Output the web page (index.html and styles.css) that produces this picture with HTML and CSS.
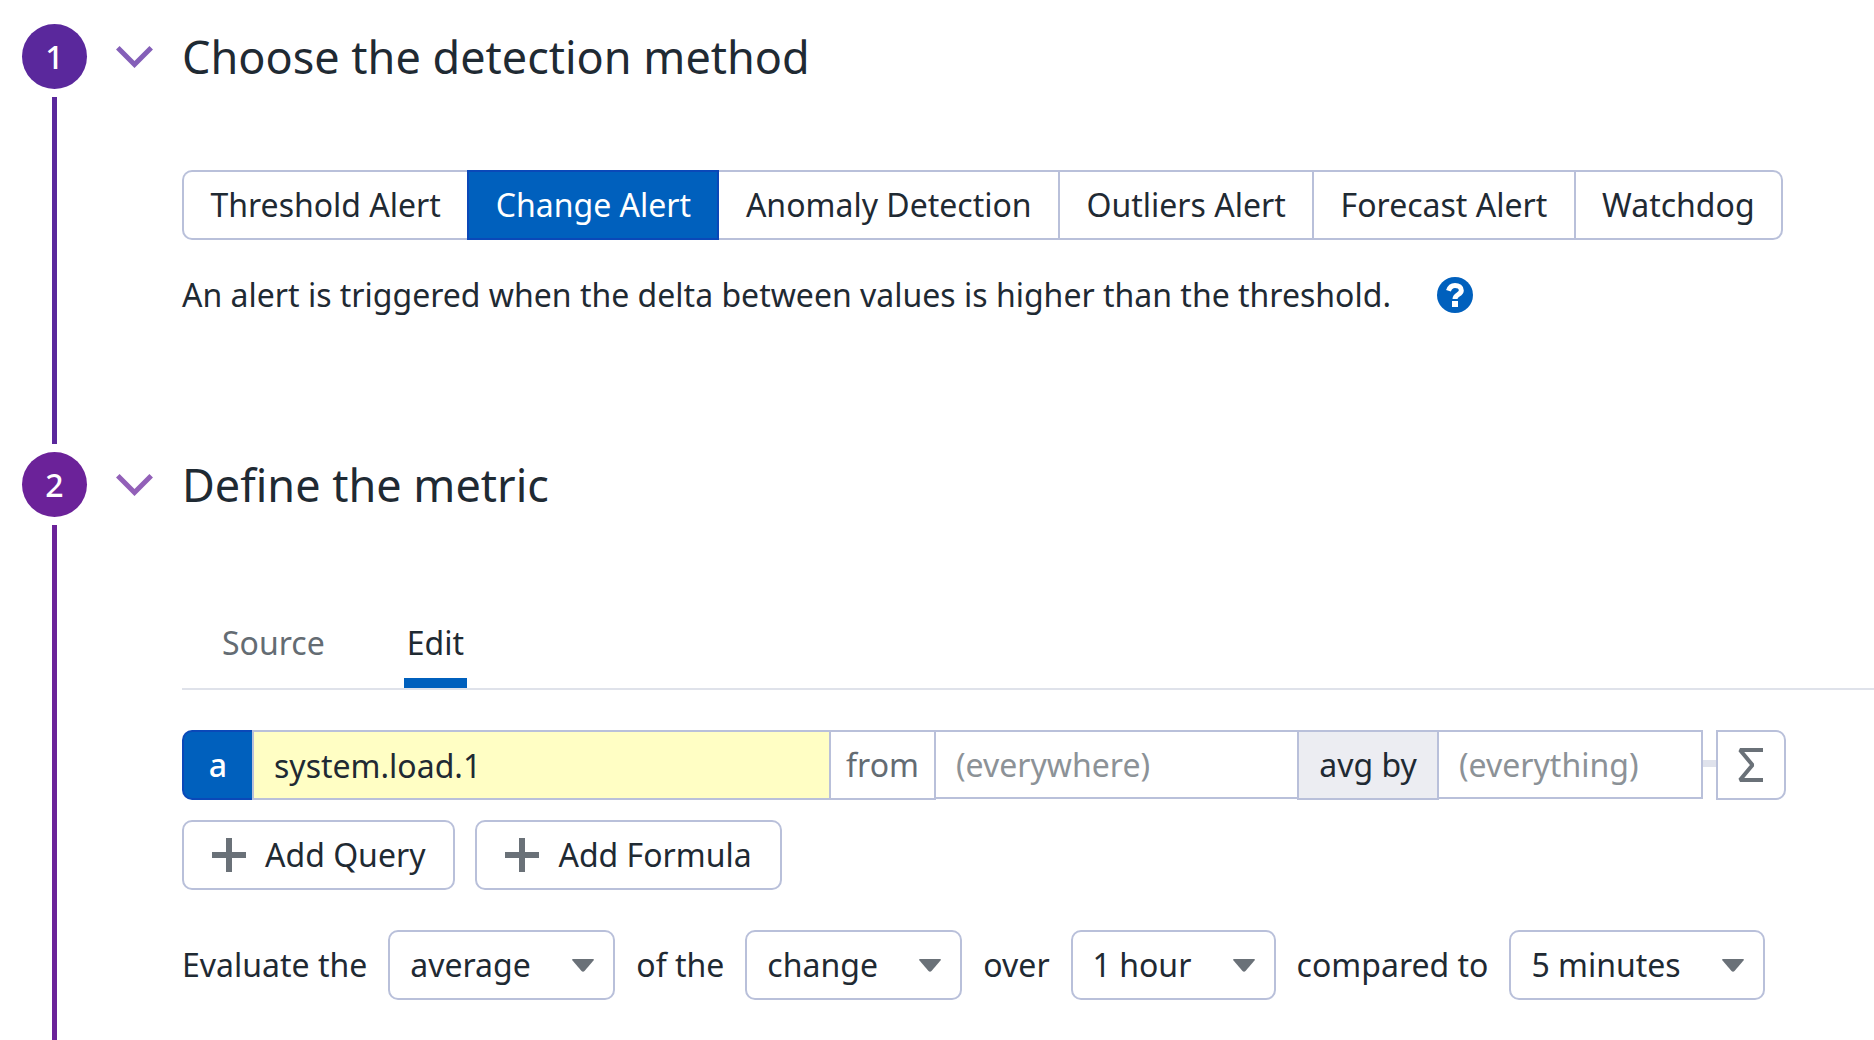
FILE: index.html
```html
<!DOCTYPE html>
<html lang="en">
<head>
<meta charset="utf-8">
<title>New Monitor</title>
<meta name="viewport" content="width=device-width, initial-scale=1">
<link rel="stylesheet" href="styles.css">
</head>
<body>
<main class="steps">
  <section class="step step-one">
    <div class="rail"><span class="badge">1</span><span class="line"></span></div>
    <button class="toggle" type="button" aria-label="Collapse step 1">
      <svg width="37" height="22" viewBox="0 0 37 22" aria-hidden="true"><path d="M1.800 1.800 18.500 18.500 35.200 1.800" fill="none" stroke="currentColor" stroke-width="5"/></svg>
    </button>
    <div class="content">
      <h2 class="title">Choose the detection method</h2>
      <div class="methods">
        <button class="method" type="button">Threshold Alert</button>
        <button class="method active" type="button" aria-pressed="true">Change Alert</button>
        <button class="method" type="button">Anomaly Detection</button>
        <button class="method" type="button">Outliers Alert</button>
        <button class="method" type="button">Forecast Alert</button>
        <button class="method" type="button">Watchdog</button>
      </div>
      <div class="description">
        <p class="text">An alert is triggered when the delta between values is higher than the threshold.</p>
        <button class="help" type="button" aria-label="Help">
          <svg width="36" height="36" viewBox="0 0 36 36" aria-hidden="true"><circle cx="18" cy="18" r="18" fill="#0060bd"/><path d="M11.500 13.800C12.500 10.400 14.800 8.500 18 8.500c3.700 0 6.300 1.800 6.300 4.900 0 4.300-6.300 3.900-6.300 8.600" fill="none" stroke="#fff" stroke-width="5"/><path d="M15 24h6v6h-6z" fill="#fff"/></svg>
        </button>
      </div>
    </div>
  </section>

  <section class="step step-two">
    <div class="rail"><span class="badge">2</span><span class="line"></span></div>
    <button class="toggle" type="button" aria-label="Collapse step 2">
      <svg width="37" height="22" viewBox="0 0 37 22" aria-hidden="true"><path d="M1.800 1.800 18.500 18.500 35.200 1.800" fill="none" stroke="currentColor" stroke-width="5"/></svg>
    </button>
    <div class="content">
      <h2 class="title">Define the metric</h2>
      <nav class="tabs">
        <a class="tab" href="#source">Source</a>
        <a class="tab current" href="#edit" aria-current="page">Edit</a>
      </nav>
      <div class="query">
        <button class="query-name" type="button">a</button>
        <input class="field metric" type="text" aria-label="Metric" value="system.load.1">
        <label class="from" for="scope">from</label>
        <input class="field scope" id="scope" type="text" placeholder="(everywhere)">
        <button class="aggregate" type="button">avg by</button>
        <input class="field group" type="text" aria-label="Group by" placeholder="(everything)">
        <span class="connector"></span>
        <button class="sigma" type="button" aria-label="Add function">
          <svg width="28" height="36" viewBox="0 0 28 36" aria-hidden="true"><path d="M26 3H3L15.500 18 3 33H26" fill="none" stroke="currentColor" stroke-width="4" stroke-linejoin="bevel"/></svg>
        </button>
      </div>
      <div class="actions">
        <button class="add" type="button"><svg width="34" height="34" viewBox="0 0 34 34" aria-hidden="true"><path d="M0 17h34M17 0v34" stroke="#6a7178" stroke-width="6"/></svg>Add Query</button>
        <button class="add" type="button"><svg width="34" height="34" viewBox="0 0 34 34" aria-hidden="true"><path d="M0 17h34M17 0v34" stroke="#6a7178" stroke-width="6"/></svg>Add Formula</button>
      </div>
      <div class="evaluate">
        <label for="aggregator">Evaluate the</label>
        <span class="picker"><select id="aggregator"><option>average</option></select><svg class="caret" width="22" height="13" viewBox="0 0 22 13" aria-hidden="true"><path d="M1 0h20q1.500 0 .5 1.500l-9 10.500q-1.500 1.500-3 0l-9-10.500Q-.5 0 1 0z" fill="currentColor"/></svg></span>
        <label for="comparison">of the</label>
        <span class="picker"><select id="comparison"><option>change</option></select><svg class="caret" width="22" height="13" viewBox="0 0 22 13" aria-hidden="true"><path d="M1 0h20q1.500 0 .5 1.500l-9 10.500q-1.500 1.500-3 0l-9-10.500Q-.5 0 1 0z" fill="currentColor"/></svg></span>
        <label for="window">over</label>
        <span class="picker"><select id="window"><option>1 hour</option></select><svg class="caret" width="22" height="13" viewBox="0 0 22 13" aria-hidden="true"><path d="M1 0h20q1.500 0 .5 1.500l-9 10.500q-1.500 1.500-3 0l-9-10.500Q-.5 0 1 0z" fill="currentColor"/></svg></span>
        <label for="baseline">compared to</label>
        <span class="picker"><select id="baseline"><option>5 minutes</option></select><svg class="caret" width="22" height="13" viewBox="0 0 22 13" aria-hidden="true"><path d="M1 0h20q1.500 0 .5 1.500l-9 10.500q-1.500 1.500-3 0l-9-10.500Q-.5 0 1 0z" fill="currentColor"/></svg></span>
      </div>
    </div>
  </section>
</main>
</body>
</html>
```
FILE: styles.css
```css
* {
  box-sizing: border-box;
}

body {
  margin: 0;
  background: #fff;
  color: #1f2a33;
  font-family: "Noto Sans", sans-serif;
  font-size: 32px;
  line-height: 44px;
}

button,
input,
select {
  margin: 0;
  padding: 0;
  border: 2px solid #b9c0da;
  border-radius: 0;
  background: #fff;
  color: inherit;
  font: inherit;
}

button {
  cursor: pointer;
}

svg {
  display: block;
  flex: none;
}

.steps {
  display: flex;
  flex-direction: column;
  min-height: 100vh;
  padding: 24px 0 0 22px;
}

.step {
  display: grid;
  grid-template-columns: 65px 37px minmax(0, 1fr);
  column-gap: 29px;
}

.step-one {
  --tone: #5a289c;
  --tone-soft: #845fb8;
}

.step-two {
  --tone: #6b2299;
  --tone-soft: #9260b8;
  flex: 1;
}

.rail {
  display: flex;
  flex-direction: column;
  align-items: center;
  gap: 8px;
}

.badge {
  display: flex;
  align-items: center;
  justify-content: center;
  width: 65px;
  height: 65px;
  border-radius: 50%;
  background: var(--tone);
  color: #fff;
  font-weight: 500;
}

.line {
  flex: 1;
  width: 5px;
  background: var(--tone);
}

.step-one .line {
  margin-bottom: 8px;
}

.toggle {
  align-self: start;
  display: flex;
  align-items: center;
  height: 65px;
  border: 0;
  color: var(--tone-soft);
}

.title {
  margin: 0;
  font-size: 45px;
  font-weight: 400;
  line-height: 65px;
}

.methods {
  display: flex;
  max-width: 1601px;
  margin-top: 81px;
}

.method {
  flex: auto;
  height: 70px;
  padding: 0 25px;
  border-left-width: 0;
  white-space: nowrap;
}

.method:first-child {
  border-left-width: 2px;
  border-right-width: 0;
  border-radius: 10px 0 0 10px;
}

.method:last-child {
  border-radius: 0 10px 10px 0;
}

.method.active {
  border-color: #0a48b8;
  border-left-width: 2px;
  background: #0060bd;
  color: #fff;
}

.description {
  display: flex;
  align-items: center;
  gap: 46px;
  padding: 33px 0 135px;
}

.text {
  margin: 0;
}

.help {
  border: 0;
  border-radius: 50%;
}

.tabs {
  display: flex;
  gap: 76px;
  margin-top: 93px;
  padding-left: 37px;
  border-bottom: 2px solid #dfe2ea;
}

.tab {
  padding: 11px 3px 13px;
  border-bottom: 10px solid transparent;
  color: #646c73;
  text-decoration: none;
}

.tab.current {
  border-bottom-color: #0060bd;
  color: #1f2a33;
}

.query {
  display: flex;
  align-items: flex-start;
  max-width: 1604px;
  margin-top: 40px;
}

.query-name {
  width: 70px;
  height: 70px;
  border-color: #0a48b8;
  border-right: 0;
  border-radius: 10px 0 0 10px;
  background: #0060bd;
  color: #fff;
  font-weight: 500;
}

.field {
  min-width: 0;
  height: 69px;
  padding: 0 20px;
}

.field::placeholder {
  color: #8c9297;
  opacity: 1;
}

.metric {
  flex: 535;
  height: 70px;
  border-right: 0;
  background: #fffec4;
}

.from {
  width: 107px;
  height: 70px;
  border: 2px solid #b9c0da;
  color: #646c73;
  line-height: 66px;
  text-align: center;
}

.scope {
  flex: 321;
  border-left: 0;
  border-right: 0;
}

.aggregate {
  width: 142px;
  height: 70px;
  background: #ecedf2;
}

.group {
  flex: 222;
  border-left: 0;
}

.connector {
  width: 13px;
  height: 7px;
  margin-top: 30px;
  background: #dfe2ec;
}

.sigma {
  display: flex;
  align-items: center;
  justify-content: center;
  width: 70px;
  height: 70px;
  border-radius: 0 10px 10px 0;
  color: #6a7178;
}

.actions {
  display: flex;
  gap: 20px;
  margin-top: 20px;
}

.add {
  display: flex;
  align-items: center;
  gap: 19px;
  height: 70px;
  padding: 0 28px;
  border-radius: 10px;
}

.evaluate {
  display: flex;
  align-items: center;
  gap: 21px;
  margin-top: 40px;
  white-space: nowrap;
}

.picker {
  display: grid;
  align-items: center;
}

.picker select {
  grid-area: 1 / 1;
  height: 70px;
  padding: 0 82px 0 20px;
  border-radius: 10px;
  appearance: none;
}

.caret {
  grid-area: 1 / 1;
  justify-self: end;
  margin-right: 21px;
  color: #6a7178;
  pointer-events: none;
}
```
